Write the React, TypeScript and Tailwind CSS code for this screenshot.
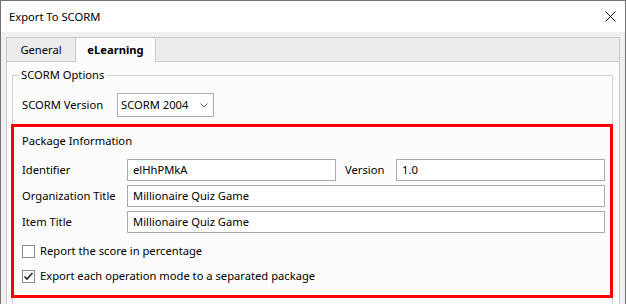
import React from 'react';

interface TextBoxProps {
  value: string;
  className?: string;
}

const TextBox: React.FC<TextBoxProps> = ({ value, className = '' }) => (
  <div
    className={`h-[22px] border border-[#ababab] bg-white pl-[5px] flex items-center whitespace-nowrap overflow-hidden ${className}`}
  >
    {value}
  </div>
);

interface CheckBoxProps {
  checked?: boolean;
  label: string;
}

const CheckBox: React.FC<CheckBoxProps> = ({ checked = false, label }) => (
  <div className="h-[16px] flex items-center">
    <div className="w-[13px] h-[13px] border border-[#8c8c8c] bg-white flex items-center justify-center">
      {checked && (
        <svg width="11" height="11" viewBox="0 0 11 11">
          <path d="M1.5 5.5 L4 8 L9.5 2" fill="none" stroke="#262626" strokeWidth="1.6" />
        </svg>
      )}
    </div>
    <span className="ml-[5px] whitespace-nowrap">{label}</span>
  </div>
);

const Row: React.FC<{ label: string; children: React.ReactNode }> = ({ label, children }) => (
  <div className="flex items-center h-[22px]">
    <span className="w-[105px] whitespace-nowrap">{label}</span>
    {children}
  </div>
);

export default function App() {
  return (
    <div className="w-[626px] h-[304px] overflow-hidden bg-[#f0f0f0] border-x border-t border-[#737373] text-[11.2px] leading-[16px] text-black font-['Noto_Sans','Segoe_UI',sans-serif]">
      {/* title bar */}
      <div className="h-[31px] bg-white flex items-center justify-between pl-[8px] pr-[9px]">
        <span className="pt-[1px]">Export To SCORM</span>
        <svg width="11" height="11" viewBox="0 0 11 11">
          <path d="M0.5 0.5 L10.5 10.5 M10.5 0.5 L0.5 10.5" stroke="#111" strokeWidth="1" />
        </svg>
      </div>

      <div className="px-[5px] pt-[5px]">
        <div className="border border-[#c8c8c8]">
          {/* tabs */}
          <div className="flex h-[24px]">
            <div className="w-[69px] bg-[#ececec] border-r border-b border-[#c8c8c8] flex items-center justify-center">
              General
            </div>
            <div className="w-[80px] bg-[#fcfcfc] border-r border-[#c8c8c8] flex items-center justify-center font-bold">
              eLearning
            </div>
            <div className="flex-1 bg-[#ececec] border-b border-[#c8c8c8]" />
          </div>

          {/* panel */}
          <div className="bg-[#fcfcfc] pl-[5px] pr-[6px] pt-[5px] h-[260px]">
            <fieldset className="border border-[#d0d0d0] pb-[20px]">
              <legend className="ml-[6px] px-[2px] leading-[16px]">SCORM Options</legend>

              <div className="flex items-center mt-[10px] pl-[9px]">
                <span className="w-[95px] whitespace-nowrap">SCORM Version</span>
                <div className="w-[97px] h-[24px] border border-[#adadad] bg-white flex items-center justify-between pl-[3px] pr-[5px]">
                  <span>SCORM 2004</span>
                  <svg width="8" height="5" viewBox="0 0 8 5">
                    <path d="M0.5 0.5 L4 4 L7.5 0.5" fill="none" stroke="#606060" strokeWidth="1" />
                  </svg>
                </div>
              </div>

              <div className="mt-[7px] -ml-[2px] -mr-[1px] border-[3px] border-[#ff0000] pl-[8px] pr-[5px] pt-[6px] pb-[11px]">
                <div>Package Information</div>

                <div className="mt-[10px] flex flex-col gap-[4px]">
                  <Row label="Identifier">
                    <TextBox value="elHhPMkA" className="w-[209px]" />
                    <span className="w-[60px] pl-[9px]">Version</span>
                    <TextBox value="1.0" className="flex-1" />
                  </Row>
                  <Row label="Organization Title">
                    <TextBox value="Millionaire Quiz Game" className="flex-1" />
                  </Row>
                  <Row label="Item Title">
                    <TextBox value="Millionaire Quiz Game" className="flex-1" />
                  </Row>
                </div>

                <div className="mt-[10px] flex flex-col gap-[9px]">
                  <CheckBox label="Report the score in percentage" />
                  <CheckBox checked label="Export each operation mode to a separated package" />
                </div>
              </div>
            </fieldset>
          </div>
        </div>
      </div>
    </div>
  );
}
